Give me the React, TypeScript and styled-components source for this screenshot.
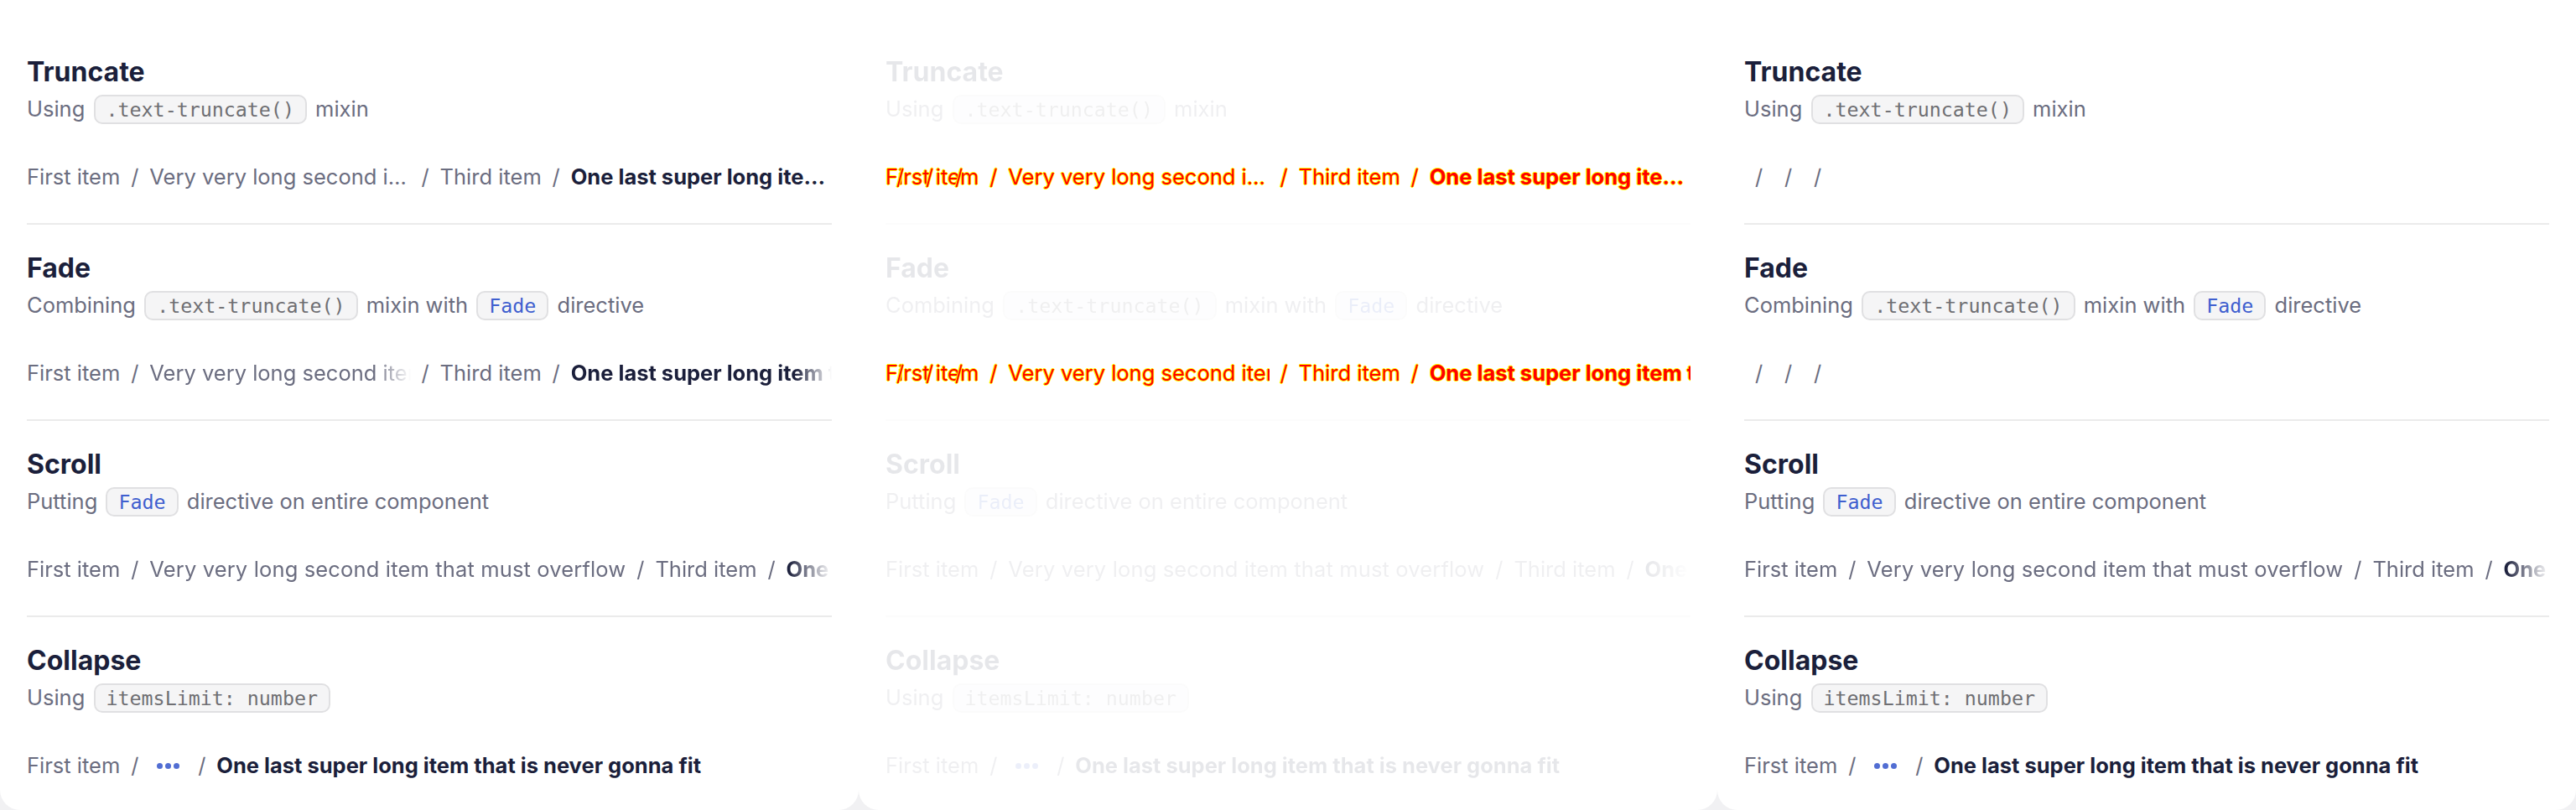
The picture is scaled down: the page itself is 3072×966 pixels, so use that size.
import React from 'react';
import styled, { createGlobalStyle, css } from 'styled-components';

type Variant = 'source' | 'diff' | 'empty';
type Kind = 'truncate' | 'fade' | 'scroll' | 'collapse';

const GlobalStyle = createGlobalStyle`
  html, body { margin: 0; padding: 0; }
  body {
    background: #f1f1f3;
    font-family: Inter, "Noto Sans", Arial, sans-serif;
  }
  #root { width: 3072px; height: 966px; }
`;

const diffInk = css`
  color: #ff0000;
  text-shadow: 1px 0 #ffff00, -1px 0 #ffff00, 0 1px #ffff00, 0 -1px #ffff00;
`;

const Page = styled.main`
  display: flex;
  width: 3072px;
  height: 966px;
  overflow: hidden;
`;

const Panel = styled.section`
  flex: 0 0 1024px;
  height: 966px;
  box-sizing: border-box;
  padding: 66px 32px 0;
  background: #ffffff;
  border-radius: 0 0 24px 24px;
  overflow: hidden;
`;

const Section = styled.article<{ $divider: boolean; $dim: boolean }>`
  display: flex;
  flex-direction: column;
  ${(p) =>
    p.$divider &&
    css`
      padding-bottom: 31px;
      margin-bottom: 32px;
      border-bottom: 2px solid ${p.$dim ? '#fcfcfc' : '#ebebeb'};
    `}
`;

const Title = styled.h3<{ $dim: boolean }>`
  margin: 0;
  font-size: 32px;
  line-height: 40px;
  font-weight: 700;
  color: #1b1f3b;
  opacity: ${(p) => (p.$dim ? 0.1 : 1)};
`;

const Description = styled.p<{ $dim: boolean }>`
  margin: 4px 0 0;
  font-size: 25.5px;
  line-height: 40px;
  color: #6b6d80;
  white-space: nowrap;
  opacity: ${(p) => (p.$dim ? 0.1 : 1)};
`;

const Code = styled.code<{ $link?: boolean }>`
  display: inline-block;
  vertical-align: middle;
  margin: -4px 3px 0;
  padding: 0 13px;
  font-family: "DejaVu Sans Mono", "Liberation Mono", monospace;
  font-size: 23.3px;
  line-height: 31px;
  color: ${(p) => (p.$link ? '#3f5fcf' : '#6f6f73')};
  background: #f5f5f6;
  border: 2px solid #e0e0e2;
  border-radius: 10px;
`;

const CrumbArea = styled.div<{ $dim?: boolean }>`
  position: relative;
  margin-top: 37px;
  height: 48px;
  opacity: ${(p) => (p.$dim ? 0.1 : 1)};
`;

const CrumbRow = styled.nav<{ $scroll?: boolean; $diff?: boolean }>`
  display: flex;
  align-items: center;
  height: 100%;
  white-space: nowrap;
  overflow: hidden;
  font-size: 25.5px;
  line-height: 34px;
  color: #6b6d80;
  ${(p) => p.$diff && diffInk}
  ${(p) =>
    p.$scroll &&
    css`
      -webkit-mask-image: linear-gradient(to right, #000 calc(100% - 52px), transparent);
      mask-image: linear-gradient(to right, #000 calc(100% - 52px), transparent);
    `}
`;

const OverlayRow = styled(CrumbRow)`
  position: absolute;
  inset: 0;
  background: transparent;
`;

const Item = styled.span<{
  $grow?: boolean;
  $clip?: 'ellipsis' | 'fade' | 'none';
  $strong?: boolean;
  $diff?: boolean;
  $wide?: boolean;
}>`
  flex: ${(p) => (p.$grow ? '1 1 0' : '0 0 auto')};
  min-width: 0;
  overflow: hidden;
  text-overflow: ${(p) => (p.$clip === 'ellipsis' ? 'ellipsis' : 'clip')};
  font-weight: ${(p) => (p.$strong ? 700 : 400)};
  letter-spacing: ${(p) => (p.$wide ? '0.15px' : 'normal')};
  color: ${(p) => (p.$diff ? '#ff0000' : p.$strong ? '#1b1f3b' : 'inherit')};
  ${(p) =>
    p.$clip === 'fade' &&
    !p.$diff &&
    css`
      -webkit-mask-image: linear-gradient(to right, #000 calc(100% - 44px), transparent);
      mask-image: linear-gradient(to right, #000 calc(100% - 44px), transparent);
    `}
`;

const Sep = styled.span`
  flex: 0 0 11px;
  margin: 0 12px;
  text-align: center;
`;

const MoreButton = styled.button`
  flex: 0 0 auto;
  display: flex;
  align-items: center;
  gap: 3px;
  height: 32px;
  padding: 0 9px;
  border: 0;
  background: transparent;
  cursor: pointer;
`;

const Dot = styled.i`
  display: block;
  width: 7px;
  height: 7px;
  border-radius: 50%;
  background: #526ed3;
`;

const SECOND = 'Very very long second item that must overflow';
const LAST = 'One last super long item that is never gonna fit';

type SectionData = {
  kind: Kind;
  title: string;
  desc: React.ReactNode;
};

const sections: SectionData[] = [
  {
    kind: 'truncate',
    title: 'Truncate',
    desc: (
      <>
        Using <Code>.text-truncate()</Code> mixin
      </>
    ),
  },
  {
    kind: 'fade',
    title: 'Fade',
    desc: (
      <>
        Combining <Code>.text-truncate()</Code> mixin with <Code $link>Fade</Code> directive
      </>
    ),
  },
  {
    kind: 'scroll',
    title: 'Scroll',
    desc: (
      <>
        Putting <Code $link>Fade</Code> directive on entire component
      </>
    ),
  },
  {
    kind: 'collapse',
    title: 'Collapse',
    desc: (
      <>
        Using <Code>itemsLimit: number</Code>
      </>
    ),
  },
];

function ShrinkRow({ kind, texts, diff }: { kind: 'truncate' | 'fade'; texts: boolean; diff?: boolean }) {
  const clip = kind === 'truncate' ? 'ellipsis' : 'fade';
  const t = (s: string) => (texts ? s : '');
  return (
    <>
      <Item $diff={diff}>{t('First item')}</Item>
      <Sep>/</Sep>
      <Item $grow={texts} $clip={clip} $diff={diff}>
        {t(SECOND)}
      </Item>
      <Sep>/</Sep>
      <Item $diff={diff}>{t('Third item')}</Item>
      <Sep>/</Sep>
      <Item $grow={texts} $clip={clip} $strong $diff={diff}>
        {t(LAST)}
      </Item>
    </>
  );
}

function Crumbs({ kind, variant }: { kind: Kind; variant: Variant }) {
  if (kind === 'collapse') {
    return (
      <CrumbArea $dim={variant === 'diff'}>
        <CrumbRow>
          <Item>First item</Item>
          <Sep>/</Sep>
          <MoreButton aria-label="Show more">
            <Dot />
            <Dot />
            <Dot />
          </MoreButton>
          <Sep>/</Sep>
          <Item $strong>{LAST}</Item>
        </CrumbRow>
      </CrumbArea>
    );
  }
  if (kind === 'scroll') {
    return (
      <CrumbArea $dim={variant === 'diff'}>
        <CrumbRow $scroll>
          <Item>First item</Item>
          <Sep>/</Sep>
          <Item $wide>{SECOND}</Item>
          <Sep>/</Sep>
          <Item>Third item</Item>
          <Sep>/</Sep>
          <Item $strong>{LAST}</Item>
        </CrumbRow>
      </CrumbArea>
    );
  }
  if (variant === 'diff') {
    return (
      <CrumbArea>
        <CrumbRow $diff>
          <ShrinkRow kind={kind} texts diff />
        </CrumbRow>
        <OverlayRow $diff>
          <ShrinkRow kind={kind} texts={false} diff />
        </OverlayRow>
      </CrumbArea>
    );
  }
  return (
    <CrumbArea>
      <CrumbRow>
        <ShrinkRow kind={kind} texts={variant === 'source'} />
      </CrumbRow>
    </CrumbArea>
  );
}

function DemoPanel({ variant }: { variant: Variant }) {
  const dim = variant === 'diff';
  return (
    <Panel>
      {sections.map((s, i) => (
        <Section key={s.kind} $divider={i < sections.length - 1} $dim={dim}>
          <Title $dim={dim}>{s.title}</Title>
          <Description $dim={dim}>{s.desc}</Description>
          <Crumbs kind={s.kind} variant={variant} />
        </Section>
      ))}
    </Panel>
  );
}

export default function App() {
  return (
    <>
      <GlobalStyle />
      <Page>
        <DemoPanel variant="source" />
        <DemoPanel variant="diff" />
        <DemoPanel variant="empty" />
      </Page>
    </>
  );
}
